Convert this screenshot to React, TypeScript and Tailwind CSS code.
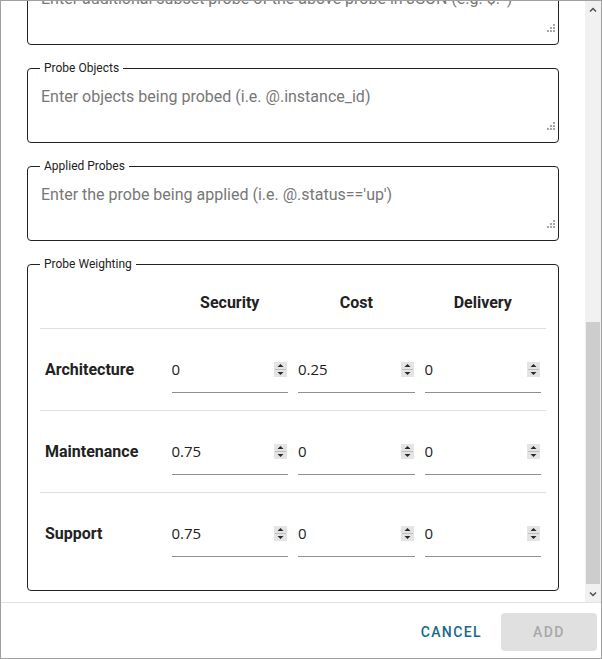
import React from 'react';

const ResizeHandle = () => (
  <svg className="absolute right-[3px] bottom-[12px]" width="8" height="8" viewBox="0 0 8 8" fill="#a8a8a8">
    <rect x="6" y="0" width="2" height="2" />
    <rect x="3" y="3" width="2" height="2" />
    <rect x="6" y="3" width="2" height="2" />
    <rect x="0" y="6" width="2" height="2" />
    <rect x="3" y="6" width="2" height="2" />
    <rect x="6" y="6" width="2" height="2" />
  </svg>
);

const TextAreaField = ({ label, placeholder }: { label: string; placeholder: string }) => (
  <fieldset className="relative border border-[#222] rounded px-3 m-0 min-w-0">
    <legend className="px-1 ml-0 text-xs leading-[14px] text-[#222]">{label}</legend>
    <textarea
      className="block w-full h-[67px] resize-none outline-none pt-[12px] pl-px text-base leading-[19px] placeholder:text-[#777] bg-transparent"
      placeholder={placeholder}
    />
    <ResizeHandle />
  </fieldset>
);

const Spinner = () => (
  <svg className="absolute right-px top-[11px]" width="13" height="15" viewBox="0 0 13 15">
    <rect x="0" y="0" width="13" height="15" fill="#e4e4e4" />
    <rect x="1" y="7" width="11" height="1" fill="#bdbdbd" />
    <path d="M3.5 5 L6.5 2 L9.5 5 Z" fill="#2a2a2a" />
    <path d="M3.5 10 L6.5 13 L9.5 10 Z" fill="#2a2a2a" />
  </svg>
);

const NumberCell = ({ value }: { value: string }) => (
  <div className="px-[5px] pt-[22px]">
    <div className="relative border-b border-[#8f8f8f] pb-[5px]">
      <input
        type="text"
        defaultValue={value}
        className="block w-full h-[36px] pr-[16px] outline-none bg-transparent text-[15px] text-[#222] font-['Open_Sans',sans-serif]"
      />
      <Spinner />
    </div>
  </div>
);

const rows = [
  { name: 'Architecture', values: ['0', '0.25', '0'] },
  { name: 'Maintenance', values: ['0.75', '0', '0'] },
  { name: 'Support', values: ['0.75', '0', '0'] },
];

export default function App() {
  return (
    <div className="w-[602px] h-[659px] border border-[#a0a0a0] bg-white flex flex-col font-['Roboto',sans-serif] text-[#222]">
      <div className="flex h-[601px]">
        <div className="flex-1 overflow-hidden px-[26px]">
          <div className="-mt-[38px] flex flex-col gap-4">
            <TextAreaField label="Probe Subset" placeholder="Enter additional subset probe of the above probe in JSON (e.g. $.*)" />
            <TextAreaField label="Probe Objects" placeholder="Enter objects being probed (i.e. @.instance_id)" />
            <TextAreaField label="Applied Probes" placeholder="Enter the probe being applied (i.e. @.status=='up')" />

            <fieldset className="border border-[#222] rounded px-3 pt-[7px] pb-[16px] m-0 min-w-0">
              <legend className="px-1 text-xs leading-[14px]">Probe Weighting</legend>
              <div className="grid grid-cols-4 h-[50px] items-center text-base font-bold">
                <div />
                <div className="text-center">Security</div>
                <div className="text-center">Cost</div>
                <div className="text-center">Delivery</div>
              </div>
              {rows.map((r) => (
                <div key={r.name} className="grid grid-cols-4 h-[82px] border-t border-[#e0e0e0]">
                  <div className="flex items-center px-[5px] pt-px text-base font-bold">{r.name}</div>
                  {r.values.map((v, i) => (
                    <NumberCell key={i} value={v} />
                  ))}
                </div>
              ))}
            </fieldset>
          </div>
        </div>

        <div className="w-[16px] bg-[#f1f1f1] flex flex-col">
          <div className="h-[16px] flex items-center justify-center">
            <svg width="8" height="5" viewBox="0 0 8 5"><path d="M1 4.5 L4 1.5 L7 4.5" stroke="#505050" strokeWidth="1.5" fill="none" /></svg>
          </div>
          <div className="flex-1 flex flex-col pt-[305px] pb-[2px] px-px">
            <div className="flex-1 bg-[#cdcdcd]" />
          </div>
          <div className="h-[16px] flex items-center justify-center">
            <svg width="8" height="5" viewBox="0 0 8 5"><path d="M1 0.5 L4 3.5 L7 0.5" stroke="#505050" strokeWidth="1.5" fill="none" /></svg>
          </div>
        </div>
      </div>

      <div className="h-px bg-[#e0e0e0]" />

      <div className="flex-1 flex items-start justify-end gap-[11px] pt-[10px] pr-[4px]">
        <button className="h-[38px] px-2 text-sm font-medium tracking-[0.1em] text-[#16698c] uppercase">Cancel</button>
        <button className="w-[96px] h-[38px] rounded bg-[#e0e0e0] text-sm font-medium tracking-[0.1em] text-[#a8a8a8] uppercase">Add</button>
      </div>
    </div>
  );
}
